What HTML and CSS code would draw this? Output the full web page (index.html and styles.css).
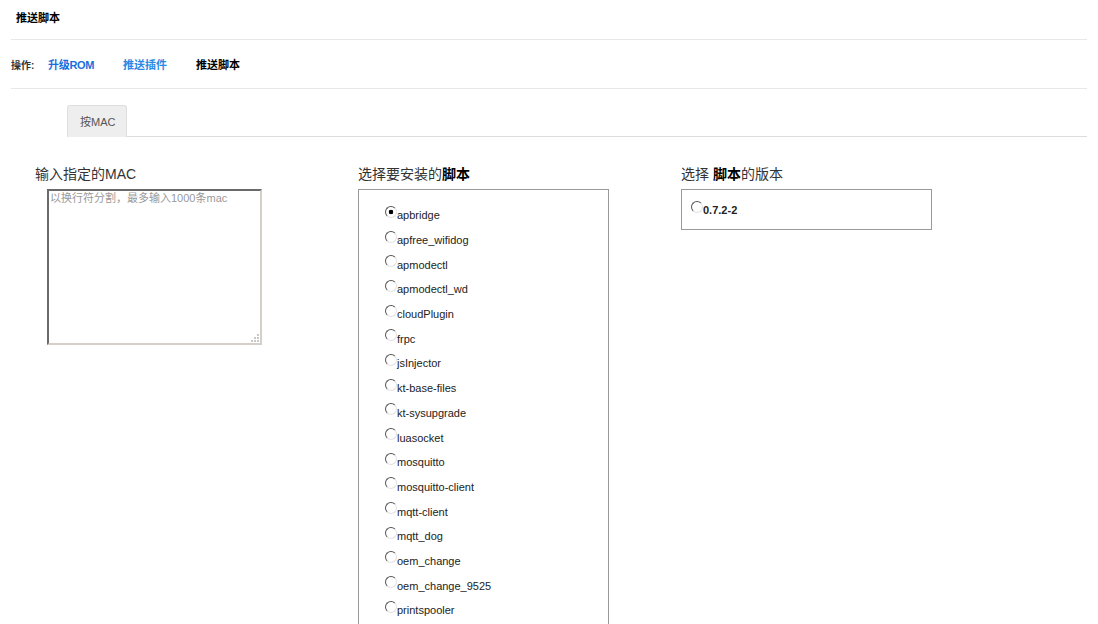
FILE: index.html
```html
<!DOCTYPE html>
<html lang="zh-CN">
<head>
<meta charset="utf-8">
<title>推送脚本</title>
<link rel="stylesheet" href="styles.css">
</head>
<body>
<div class="page">
  <div class="title">推送脚本</div>
  <div class="ops">
    <span class="ops-label">操作:</span>
    <a class="op op-rom">升级ROM</a>
    <a class="op op-plugin">推送插件</a>
    <span class="op op-current">推送脚本</span>
  </div>
  <ul class="tabs">
    <li class="tab">按MAC</li>
  </ul>
  <div class="columns">
    <div class="col">
      <div class="label">输入指定的MAC</div>
      <div class="ta-wrap">
        <textarea class="mac-input" placeholder="以换行符分割，最多输入1000条mac"></textarea>
        <svg class="grip" width="9" height="9" viewBox="0 0 9 9">
          <rect x="7" y="1" width="2" height="2" fill="#c8c8c8"/>
          <rect x="4" y="4" width="2" height="2" fill="#c8c8c8"/>
          <rect x="7" y="4" width="2" height="2" fill="#c8c8c8"/>
          <rect x="1" y="7" width="2" height="2" fill="#c8c8c8"/>
          <rect x="4" y="7" width="2" height="2" fill="#c8c8c8"/>
          <rect x="7" y="7" width="2" height="2" fill="#c8c8c8"/>
        </svg>
      </div>
    </div>
    <div class="col">
      <div class="label">选择要安装的<b>脚本</b></div>
      <div class="box list-box">
        <label class="item"><input type="radio" name="script" checked><span>apbridge</span></label>
        <label class="item"><input type="radio" name="script"><span>apfree_wifidog</span></label>
        <label class="item"><input type="radio" name="script"><span>apmodectl</span></label>
        <label class="item"><input type="radio" name="script"><span>apmodectl_wd</span></label>
        <label class="item"><input type="radio" name="script"><span>cloudPlugin</span></label>
        <label class="item"><input type="radio" name="script"><span>frpc</span></label>
        <label class="item"><input type="radio" name="script"><span>jsInjector</span></label>
        <label class="item"><input type="radio" name="script"><span>kt-base-files</span></label>
        <label class="item"><input type="radio" name="script"><span>kt-sysupgrade</span></label>
        <label class="item"><input type="radio" name="script"><span>luasocket</span></label>
        <label class="item"><input type="radio" name="script"><span>mosquitto</span></label>
        <label class="item"><input type="radio" name="script"><span>mosquitto-client</span></label>
        <label class="item"><input type="radio" name="script"><span>mqtt-client</span></label>
        <label class="item"><input type="radio" name="script"><span>mqtt_dog</span></label>
        <label class="item"><input type="radio" name="script"><span>oem_change</span></label>
        <label class="item"><input type="radio" name="script"><span>oem_change_9525</span></label>
        <label class="item"><input type="radio" name="script"><span>printspooler</span></label>
      </div>
    </div>
    <div class="col">
      <div class="label">选择 <b>脚本</b>的版本</div>
      <div class="box version-box">
        <label class="item"><input type="radio" name="ver"><span class="ver">0.7.2-2</span></label>
      </div>
    </div>
  </div>
</div>
</body>
</html>
```
FILE: styles.css
```css
html, body {
  margin: 0;
  padding: 0;
  background: #fff;
}
body {
  font-family: "Liberation Sans", "Noto Sans CJK SC", sans-serif;
  color: #333;
  overflow: hidden;
  height: 624px;
}
.page {
  padding: 0 11px;
}
.title {
  height: 39px;
  line-height: 37px;
  padding-left: 5px;
  font-size: 11px;
  font-weight: bold;
  color: #000;
  border-bottom: 1px solid #e8e8e8;
}
.ops {
  height: 48px;
  display: flex;
  align-items: center;
  border-bottom: 1px solid #e8e8e8;
  font-size: 11px;
  font-weight: bold;
}
.ops-label {
  font-size: 10px;
  color: #333;
  width: 37px;
}
.op {
  display: inline-block;
  text-decoration: none;
}
.op-rom {
  color: #1a6fdc;
  width: 75px;
  letter-spacing: -0.3px;
}
.op-plugin {
  color: #2b88e4;
  width: 73px;
}
.op-current {
  color: #000;
}
.tabs {
  list-style: none;
  margin: 16px 0 0 56px;
  padding: 0;
  display: flex;
  border-bottom: 1px solid #dcdcdc;
}
.tab {
  height: 31px;
  line-height: 32px;
  padding: 0 11px 0 12px;
  background: #eeeeee;
  border: 1px solid #dedede;
  border-bottom: none;
  border-radius: 3px 3px 0 0;
  font-size: 11px;
  color: #555;
  margin-bottom: -1px;
}
.columns {
  display: grid;
  grid-template-columns: 323px 323px 1fr;
  padding: 27px 0 0 24px;
}
.label {
  font-size: 14px;
  line-height: 20px;
  height: 20px;
  margin-bottom: 5px;
  color: #333;
}
.label b {
  color: #000;
}
.ta-wrap {
  position: relative;
  margin-left: 12px;
  width: 215px;
  height: 156px;
}
.mac-input {
  box-sizing: border-box;
  width: 215px;
  height: 156px;
  margin: 0;
  padding: 0 1px;
  resize: none;
  border-style: solid;
  border-width: 2px 2px 2px 2px;
  border-color: #6a6a6a #d4d0c8 #d4d0c8 #6a6a6a;
  font-family: "Liberation Sans", "Noto Sans CJK SC", sans-serif;
  font-size: 11px;
  line-height: 15px;
  color: #333;
  outline: none;
  background: #fff;
}
.mac-input::placeholder {
  color: #9a9a9a;
}
.grip {
  position: absolute;
  right: 3px;
  bottom: 3px;
}
.box {
  box-sizing: border-box;
  width: 251px;
  border: 1px solid #999;
  background: #fff;
}
.list-box {
  padding: 13px 0 0 27px;
  height: 460px;
}
.version-box {
  height: 41px;
  padding: 8px 0 0 10px;
}
.item {
  display: flex;
  align-items: center;
  height: 24.7px;
  font-size: 11px;
  color: #222;
}
.item input {
  -webkit-appearance: none;
  appearance: none;
  box-sizing: border-box;
  width: 12px;
  height: 12px;
  margin: 0 0 7px -1px;
  border-radius: 50%;
  border: 1px solid;
  border-color: #555 #e2e2e2 #e2e2e2 #555;
  background: #fff;
  flex: none;
}
.item input:checked {
  background: radial-gradient(circle, #000 0 2px, #fff 2.6px);
}
.ver {
  font-weight: bold;
  color: #222;
}
```
